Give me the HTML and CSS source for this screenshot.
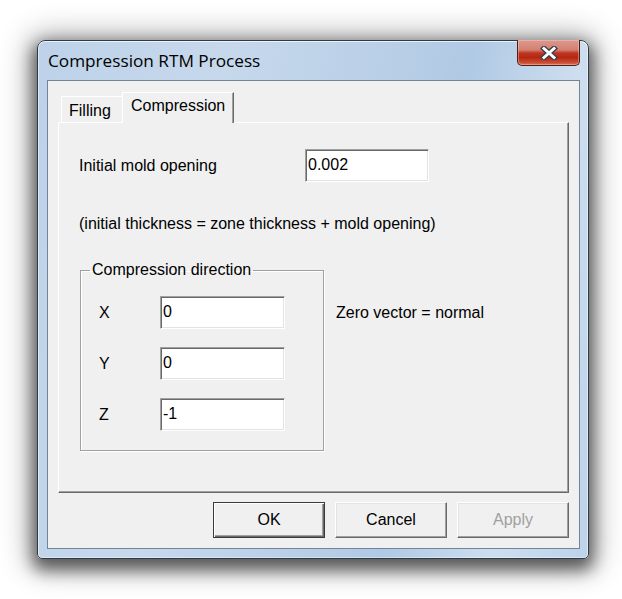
FILE: index.html
```html
<!DOCTYPE html>
<html lang="en">
<head>
<meta charset="utf-8">
<title>Compression RTM Process</title>
<link rel="stylesheet" href="styles.css">
</head>
<body>
<div class="window">
  <div class="titlebar">
    <span class="title">Compression RTM Process</span>
    <div class="close" aria-label="Close">
      <svg width="18" height="14" viewBox="0 0 18 14">
        <path d="M4 2.5 L14 11.5 M14 2.5 L4 11.5" stroke="#3b3f4c" stroke-width="5.6" stroke-linecap="square" fill="none"/>
        <path d="M4 2.5 L14 11.5 M14 2.5 L4 11.5" stroke="#ffffff" stroke-width="3" stroke-linecap="square" fill="none"/>
      </svg>
    </div>
  </div>
  <div class="client">
    <div class="tabs">
      <div class="tab">Filling</div>
      <div class="tab active">Compression</div>
    </div>
    <div class="panel">
      <div class="row-opening">
        <span class="label">Initial mold opening</span>
        <input class="field wide" type="text" value="0.002">
      </div>
      <div class="note">(initial thickness = zone thickness + mold opening)</div>
      <div class="direction">
        <fieldset class="group">
          <legend>Compression direction</legend>
          <div class="axis"><span class="axis-label">X</span><input class="field" type="text" value="0"></div>
          <div class="axis"><span class="axis-label">Y</span><input class="field" type="text" value="0"></div>
          <div class="axis"><span class="axis-label">Z</span><input class="field" type="text" value="-1"></div>
        </fieldset>
        <div class="hint">Zero vector = normal</div>
      </div>
    </div>
    <div class="buttons">
      <button class="btn default">OK</button>
      <button class="btn">Cancel</button>
      <button class="btn disabled">Apply</button>
    </div>
  </div>
</div>
</body>
</html>
```
FILE: styles.css
```css
* { box-sizing: border-box; }

html { height: 100%; background: #ffffff; }

body {
  margin: 0;
  min-height: 100%;
  padding: 40px 0 40px 37px;
  background: #ffffff;
  font-family: "Liberation Sans", Arial, sans-serif;
  font-size: 16px;
  line-height: 20px;
  color: #000;
}

.window {
  width: 552px;
  height: 519px;
  border: 1px solid #2f3a47;
  border-radius: 8px 8px 5px 5px;
  padding: 0 8px 9px 9px;
  display: flex;
  flex-direction: column;
  background:
    linear-gradient(100deg, #bdd2e9 0%, #c6d8ec 30%, #b9cfe7 55%, #b0c9e4 68%, #cddeef 85%, #bdd3ea 100%);
  box-shadow:
    0 7px 16px 4px rgba(0, 0, 0, 0.55),
    0 2px 30px 8px rgba(0, 0, 0, 0.3),
    inset 0 1px 0 rgba(255, 255, 255, 0.7),
    inset 1px 0 0 rgba(255, 255, 255, 0.5),
    inset -1px 0 0 rgba(255, 255, 255, 0.5),
    inset 0 -1px 0 rgba(255, 255, 255, 0.4);
}

.titlebar {
  height: 39px;
  display: flex;
  justify-content: space-between;
  align-items: center;
  padding-left: 1px;
}

.title {
  font-family: "Open Sans", "Noto Sans", sans-serif;
  font-size: 17.2px;
  line-height: 24px;
  color: #000;
  padding-top: 1px;
}

.close {
  align-self: flex-start;
  margin-top: -1px;
  width: 63px;
  height: 26px;
  border: 1px solid #4b1f1a;
  border-top: none;
  border-radius: 0 0 5px 5px;
  background: linear-gradient(#dc9a8e 0%, #d27f71 40%, #bf3522 52%, #b42812 70%, #c94d33 90%, #dc7356 100%);
  box-shadow: inset 0 0 0 1px rgba(255, 210, 200, 0.4);
  display: flex;
  align-items: center;
  justify-content: center;
}

.client {
  flex: 1;
  border: 1px solid #73849a;
  background: #f0f0f0;
  padding: 11px 10px 10px 10px;
  display: flex;
  flex-direction: column;
}

.tabs {
  height: 30px;
  display: flex;
  align-items: flex-end;
  padding-left: 3px;
  position: relative;
  z-index: 1;
}

.tab {
  height: 26px;
  width: 61px;
  background: #f0f0f0;
  border-top: 1px solid #fff;
  border-left: 1px solid #fff;
  display: flex;
  align-items: center;
  padding-left: 7px;
  padding-top: 2px;
}

.tab.active {
  height: 31px;
  width: 112px;
  margin-bottom: -1px;
  padding-left: 8px;
  padding-top: 0;
  padding-bottom: 4px;
  border-right: 1px solid #696969;
  box-shadow: inset -1px 0 0 #a0a0a0;
}

.panel {
  flex: 1;
  border-top: 1px solid #fff;
  border-left: 1px solid #fff;
  border-right: 1px solid #696969;
  border-bottom: 1px solid #696969;
  box-shadow: inset -1px -1px 0 #a0a0a0;
  padding: 26px 0 0 20px;
}

.row-opening {
  display: grid;
  grid-template-columns: 226px 124px;
  align-items: center;
}

.field {
  display: block;
  width: 125px;
  height: 33px;
  margin: 0;
  padding: 0 2px 2px 2px;
  font: inherit;
  color: #000;
  background: #fff;
  border-top: 1px solid #a0a0a0;
  border-left: 1px solid #a0a0a0;
  border-right: 1px solid #fff;
  border-bottom: 1px solid #fff;
  box-shadow: inset 1px 1px 0 #696969, inset -1px -1px 0 #e3e3e3;
  outline: none;
}

.field.wide { width: 124px; }

.note {
  margin-top: 32px;
}

.direction {
  margin-top: 26px;
  display: flex;
  align-items: flex-start;
}

.group {
  margin: 0 0 0 1px;
  width: 244px;
  padding: 16px 0 19px 0;
  border: 1px solid #a0a0a0;
  box-shadow: inset 1px 1px 0 #fff, 1px 1px 0 #fff;
  display: flex;
  flex-direction: column;
  gap: 18px;
}

.group legend {
  margin-left: 9px;
  padding: 0 2px;
}

.axis {
  display: grid;
  grid-template-columns: 61px 125px;
  align-items: center;
  padding-left: 18px;
}

.axis-label { padding-top: 1px; }

.hint {
  margin-left: 12px;
  margin-top: 43px;
}

.buttons {
  margin-top: 9px;
  display: flex;
  justify-content: flex-end;
  gap: 10px;
}

.btn {
  width: 112px;
  height: 36px;
  margin: 0;
  padding: 0;
  font: inherit;
  color: #000;
  background: #f0f0f0;
  border-top: 1px solid #fff;
  border-left: 1px solid #fff;
  border-right: 1px solid #696969;
  border-bottom: 1px solid #696969;
  box-shadow: inset -1px -1px 0 #a0a0a0, inset 1px 1px 0 #e3e3e3;
}

.btn.default {
  border: 1px solid #3a3a3a;
  box-shadow: inset 1px 1px 0 #fff, inset -1px -1px 0 #696969, inset -2px -2px 0 #a0a0a0;
}

.btn.disabled {
  color: #a0a0a0;
}
```
